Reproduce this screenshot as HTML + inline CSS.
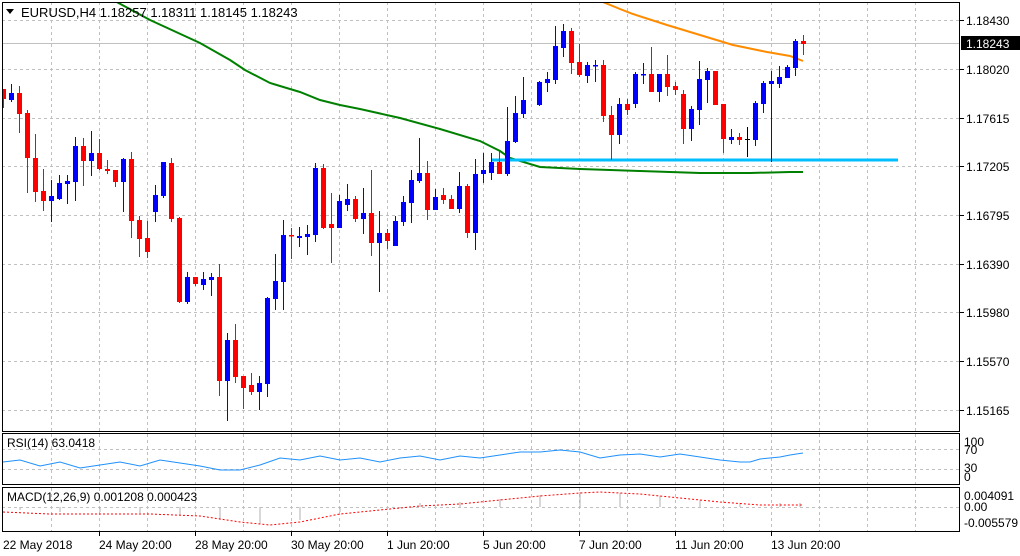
<!DOCTYPE html>
<html><head><meta charset="utf-8"><style>
html,body{margin:0;padding:0;background:#fff;width:1020px;height:556px;overflow:hidden}
svg{display:block;font-family:"Liberation Sans",sans-serif}
</style></head><body>
<svg width="1020" height="556" viewBox="0 0 1020 556" xmlns="http://www.w3.org/2000/svg">
<rect width="1020" height="556" fill="#fff"/>
<defs><clipPath id="mc"><rect x="2" y="2" width="958" height="430"/></clipPath></defs>
<g stroke="#c0c0c0" stroke-dasharray="3,3" stroke-width="1">
<line x1="51.5" y1="2" x2="51.5" y2="532"/><line x1="99.5" y1="2" x2="99.5" y2="532"/><line x1="147.5" y1="2" x2="147.5" y2="532"/><line x1="195.5" y1="2" x2="195.5" y2="532"/><line x1="243.5" y1="2" x2="243.5" y2="532"/><line x1="291.5" y1="2" x2="291.5" y2="532"/><line x1="339.5" y1="2" x2="339.5" y2="532"/><line x1="387.5" y1="2" x2="387.5" y2="532"/><line x1="435.5" y1="2" x2="435.5" y2="532"/><line x1="483.5" y1="2" x2="483.5" y2="532"/><line x1="531.5" y1="2" x2="531.5" y2="532"/><line x1="579.5" y1="2" x2="579.5" y2="532"/><line x1="627.5" y1="2" x2="627.5" y2="532"/><line x1="675.5" y1="2" x2="675.5" y2="532"/><line x1="723.5" y1="2" x2="723.5" y2="532"/><line x1="771.5" y1="2" x2="771.5" y2="532"/><line x1="819.5" y1="2" x2="819.5" y2="532"/><line x1="867.5" y1="2" x2="867.5" y2="532"/><line x1="915.5" y1="2" x2="915.5" y2="532"/>
<line x1="2" y1="20.5" x2="960" y2="20.5"/><line x1="2" y1="69.5" x2="960" y2="69.5"/><line x1="2" y1="118.5" x2="960" y2="118.5"/><line x1="2" y1="166.5" x2="960" y2="166.5"/><line x1="2" y1="215.5" x2="960" y2="215.5"/><line x1="2" y1="264.5" x2="960" y2="264.5"/><line x1="2" y1="312.5" x2="960" y2="312.5"/><line x1="2" y1="361.5" x2="960" y2="361.5"/><line x1="2" y1="410.5" x2="960" y2="410.5"/>
<line x1="2" y1="449.5" x2="960" y2="449.5"/><line x1="2" y1="469.5" x2="960" y2="469.5"/><line x1="2" y1="507.5" x2="960" y2="507.5"/>
</g>
<rect x="0" y="433" width="962" height="1" fill="#fff"/>
<line x1="2" y1="43.5" x2="960" y2="43.5" stroke="#c0c0c0"/>
<g clip-path="url(#mc)">
<polyline fill="none" stroke="#008000" stroke-width="2" points="113,0 150,20 200,43 230,60 245,70 270,83 280,86 300,92 320,100 340,105 360,109 400,118 440,129 480,141 500,151 510,158 540,167 580,169 640,171 700,173 750,173 790,172 803,172"/>
<polyline fill="none" stroke="#ff8c00" stroke-width="2" points="598,0 620,9 633,14 667,25 700,35 733,45 767,52 790,56 803,61"/>
<line x1="492" y1="160" x2="898" y2="160" stroke="#00bfff" stroke-width="3"/>
<g fill="#f00" stroke="#f00">
<line x1="3.5" y1="89" x2="3.5" y2="108"/><rect x="1" y="89" width="5" height="10" stroke="none"/>
<line x1="19.5" y1="86" x2="19.5" y2="133"/><rect x="17" y="93" width="5" height="21" stroke="none"/>
<line x1="27.5" y1="110" x2="27.5" y2="193"/><rect x="25" y="113" width="5" height="45" stroke="none"/>
<line x1="35.5" y1="134" x2="35.5" y2="202"/><rect x="33" y="158" width="5" height="34" stroke="none"/>
<line x1="43.5" y1="169" x2="43.5" y2="211"/><rect x="41" y="191" width="5" height="10" stroke="none"/>
<line x1="83.5" y1="138" x2="83.5" y2="186"/><rect x="81" y="146" width="5" height="15" stroke="none"/>
<line x1="99.5" y1="139" x2="99.5" y2="170"/><rect x="97" y="153" width="5" height="16" stroke="none"/>
<line x1="107.5" y1="160" x2="107.5" y2="174"/><rect x="105" y="169" width="5" height="2" stroke="none"/>
<line x1="115.5" y1="170" x2="115.5" y2="187"/><rect x="113" y="170" width="5" height="12" stroke="none"/>
<line x1="131.5" y1="152" x2="131.5" y2="238"/><rect x="129" y="159" width="5" height="62" stroke="none"/>
<line x1="139.5" y1="216" x2="139.5" y2="257"/><rect x="137" y="220" width="5" height="19" stroke="none"/>
<line x1="147.5" y1="221" x2="147.5" y2="258"/><rect x="145" y="238" width="5" height="14" stroke="none"/>
<line x1="171.5" y1="158" x2="171.5" y2="222"/><rect x="169" y="163" width="5" height="56" stroke="none"/>
<line x1="179.5" y1="217" x2="179.5" y2="303"/><rect x="177" y="218" width="5" height="84" stroke="none"/>
<line x1="195.5" y1="277" x2="195.5" y2="286"/><rect x="193" y="277" width="5" height="7" stroke="none"/>
<line x1="219.5" y1="264" x2="219.5" y2="396"/><rect x="217" y="277" width="5" height="104" stroke="none"/>
<line x1="235.5" y1="324" x2="235.5" y2="383"/><rect x="233" y="340" width="5" height="37" stroke="none"/>
<line x1="243.5" y1="376" x2="243.5" y2="409"/><rect x="241" y="376" width="5" height="12" stroke="none"/>
<line x1="251.5" y1="373" x2="251.5" y2="395"/><rect x="249" y="385" width="5" height="7" stroke="none"/>
<line x1="291.5" y1="228" x2="291.5" y2="259"/><rect x="289" y="235" width="5" height="1.5" stroke="none"/>
<line x1="323.5" y1="164" x2="323.5" y2="229"/><rect x="321" y="168" width="5" height="60" stroke="none"/>
<line x1="331.5" y1="193" x2="331.5" y2="263"/><rect x="329" y="224" width="5" height="4" stroke="none"/>
<line x1="355.5" y1="196" x2="355.5" y2="222"/><rect x="353" y="199" width="5" height="20" stroke="none"/>
<line x1="371.5" y1="170" x2="371.5" y2="256"/><rect x="369" y="213" width="5" height="30" stroke="none"/>
<line x1="387.5" y1="229" x2="387.5" y2="249"/><rect x="385" y="233" width="5" height="8" stroke="none"/>
<line x1="427.5" y1="161" x2="427.5" y2="220"/><rect x="425" y="173" width="5" height="37" stroke="none"/>
<line x1="443.5" y1="188" x2="443.5" y2="204"/><rect x="441" y="195" width="5" height="5" stroke="none"/>
<line x1="451.5" y1="195" x2="451.5" y2="209"/><rect x="449" y="199" width="5" height="10" stroke="none"/>
<line x1="467.5" y1="184" x2="467.5" y2="238"/><rect x="465" y="186" width="5" height="47" stroke="none"/>
<line x1="499.5" y1="150" x2="499.5" y2="174"/><rect x="497" y="162" width="5" height="12" stroke="none"/>
<line x1="571.5" y1="28" x2="571.5" y2="74"/><rect x="569" y="31" width="5" height="32" stroke="none"/>
<line x1="579.5" y1="44" x2="579.5" y2="77"/><rect x="577" y="62" width="5" height="13" stroke="none"/>
<line x1="603.5" y1="60" x2="603.5" y2="122"/><rect x="601" y="65" width="5" height="51" stroke="none"/>
<line x1="611.5" y1="106" x2="611.5" y2="160"/><rect x="609" y="115" width="5" height="20" stroke="none"/>
<line x1="627.5" y1="99" x2="627.5" y2="115"/><rect x="625" y="104" width="5" height="6" stroke="none"/>
<line x1="651.5" y1="47" x2="651.5" y2="92"/><rect x="649" y="74" width="5" height="18" stroke="none"/>
<line x1="667.5" y1="55" x2="667.5" y2="96"/><rect x="665" y="74" width="5" height="13" stroke="none"/>
<line x1="675.5" y1="82" x2="675.5" y2="95"/><rect x="673" y="86" width="5" height="4" stroke="none"/>
<line x1="683.5" y1="90" x2="683.5" y2="144"/><rect x="681" y="94" width="5" height="35" stroke="none"/>
<line x1="715.5" y1="71" x2="715.5" y2="105"/><rect x="713" y="71" width="5" height="34" stroke="none"/>
<line x1="723.5" y1="104" x2="723.5" y2="153"/><rect x="721" y="104" width="5" height="35" stroke="none"/>
<line x1="739.5" y1="133" x2="739.5" y2="145"/><rect x="737" y="137" width="5" height="3" stroke="none"/>
<line x1="803.5" y1="35" x2="803.5" y2="55"/><rect x="801" y="41" width="5" height="3" stroke="none"/>
</g>
<g fill="#00f" stroke="#00f">
<line x1="11.5" y1="84" x2="11.5" y2="102"/><rect x="9" y="93" width="5" height="7" stroke="none"/>
<line x1="51.5" y1="180" x2="51.5" y2="222"/><rect x="49" y="196" width="5" height="5" stroke="none"/>
<line x1="59.5" y1="175" x2="59.5" y2="200"/><rect x="57" y="183" width="5" height="16" stroke="none"/>
<line x1="67.5" y1="175" x2="67.5" y2="204"/><rect x="65" y="181" width="5" height="3" stroke="none"/>
<line x1="75.5" y1="137" x2="75.5" y2="201"/><rect x="73" y="146" width="5" height="36" stroke="none"/>
<line x1="91.5" y1="131" x2="91.5" y2="176"/><rect x="89" y="153" width="5" height="8" stroke="none"/>
<line x1="123.5" y1="158" x2="123.5" y2="212"/><rect x="121" y="159" width="5" height="23" stroke="none"/>
<line x1="155.5" y1="185" x2="155.5" y2="222"/><rect x="153" y="195" width="5" height="17" stroke="none"/>
<line x1="163.5" y1="162" x2="163.5" y2="198"/><rect x="161" y="162" width="5" height="34" stroke="none"/>
<line x1="187.5" y1="272" x2="187.5" y2="304"/><rect x="185" y="277" width="5" height="25" stroke="none"/>
<line x1="203.5" y1="272" x2="203.5" y2="290"/><rect x="201" y="279" width="5" height="6" stroke="none"/>
<line x1="211.5" y1="273" x2="211.5" y2="296"/><rect x="209" y="277" width="5" height="3" stroke="none"/>
<line x1="227.5" y1="333" x2="227.5" y2="421"/><rect x="225" y="340" width="5" height="41" stroke="none"/>
<line x1="259.5" y1="376" x2="259.5" y2="410"/><rect x="257" y="383" width="5" height="9" stroke="none"/>
<line x1="267.5" y1="297" x2="267.5" y2="397"/><rect x="265" y="298" width="5" height="86" stroke="none"/>
<line x1="275.5" y1="254" x2="275.5" y2="310"/><rect x="273" y="281" width="5" height="18" stroke="none"/>
<line x1="283.5" y1="220" x2="283.5" y2="310"/><rect x="281" y="235" width="5" height="47" stroke="none"/>
<line x1="299.5" y1="227" x2="299.5" y2="247"/><rect x="297" y="236" width="5" height="2" stroke="none"/>
<line x1="307.5" y1="225" x2="307.5" y2="255"/><rect x="305" y="234" width="5" height="3" stroke="none"/>
<line x1="315.5" y1="163" x2="315.5" y2="242"/><rect x="313" y="168" width="5" height="67" stroke="none"/>
<line x1="339.5" y1="195" x2="339.5" y2="228"/><rect x="337" y="201" width="5" height="27" stroke="none"/>
<line x1="347.5" y1="184" x2="347.5" y2="211"/><rect x="345" y="199" width="5" height="6" stroke="none"/>
<line x1="363.5" y1="188" x2="363.5" y2="234"/><rect x="361" y="213" width="5" height="6" stroke="none"/>
<line x1="379.5" y1="211" x2="379.5" y2="292"/><rect x="377" y="233" width="5" height="10" stroke="none"/>
<line x1="395.5" y1="216" x2="395.5" y2="246"/><rect x="393" y="221" width="5" height="25" stroke="none"/>
<line x1="403.5" y1="196" x2="403.5" y2="226"/><rect x="401" y="202" width="5" height="20" stroke="none"/>
<line x1="411.5" y1="170" x2="411.5" y2="223"/><rect x="409" y="180" width="5" height="23" stroke="none"/>
<line x1="419.5" y1="138" x2="419.5" y2="183"/><rect x="417" y="173" width="5" height="8" stroke="none"/>
<line x1="435.5" y1="189" x2="435.5" y2="210"/><rect x="433" y="197" width="5" height="13" stroke="none"/>
<line x1="459.5" y1="172" x2="459.5" y2="213"/><rect x="457" y="186" width="5" height="23" stroke="none"/>
<line x1="475.5" y1="159" x2="475.5" y2="250"/><rect x="473" y="174" width="5" height="59" stroke="none"/>
<line x1="483.5" y1="153" x2="483.5" y2="183"/><rect x="481" y="170" width="5" height="4" stroke="none"/>
<line x1="491.5" y1="153" x2="491.5" y2="180"/><rect x="489" y="162" width="5" height="11" stroke="none"/>
<line x1="507.5" y1="107" x2="507.5" y2="176"/><rect x="505" y="141" width="5" height="33" stroke="none"/>
<line x1="515.5" y1="96" x2="515.5" y2="143"/><rect x="513" y="113" width="5" height="29" stroke="none"/>
<line x1="523.5" y1="77" x2="523.5" y2="118"/><rect x="521" y="100" width="5" height="14" stroke="none"/>
<line x1="539.5" y1="81" x2="539.5" y2="106"/><rect x="537" y="82" width="5" height="23" stroke="none"/>
<line x1="547.5" y1="72" x2="547.5" y2="92"/><rect x="545" y="79" width="5" height="4" stroke="none"/>
<line x1="555.5" y1="26" x2="555.5" y2="84"/><rect x="553" y="46" width="5" height="34" stroke="none"/>
<line x1="563.5" y1="24" x2="563.5" y2="57"/><rect x="561" y="31" width="5" height="17" stroke="none"/>
<line x1="587.5" y1="62" x2="587.5" y2="83"/><rect x="585" y="65" width="5" height="11" stroke="none"/>
<line x1="595.5" y1="60" x2="595.5" y2="82"/><rect x="593" y="65" width="5" height="1.5" stroke="none"/>
<line x1="619.5" y1="98" x2="619.5" y2="144"/><rect x="617" y="104" width="5" height="31" stroke="none"/>
<line x1="635.5" y1="72" x2="635.5" y2="108"/><rect x="633" y="74" width="5" height="30" stroke="none"/>
<line x1="643.5" y1="63" x2="643.5" y2="84"/><rect x="641" y="74" width="5" height="1.5" stroke="none"/>
<line x1="659.5" y1="74" x2="659.5" y2="102"/><rect x="657" y="74" width="5" height="18" stroke="none"/>
<line x1="691.5" y1="106" x2="691.5" y2="141"/><rect x="689" y="109" width="5" height="20" stroke="none"/>
<line x1="699.5" y1="61" x2="699.5" y2="125"/><rect x="697" y="79" width="5" height="31" stroke="none"/>
<line x1="707.5" y1="68" x2="707.5" y2="103"/><rect x="705" y="71" width="5" height="9" stroke="none"/>
<line x1="731.5" y1="129" x2="731.5" y2="144"/><rect x="729" y="137" width="5" height="3" stroke="none"/>
<line x1="755.5" y1="101" x2="755.5" y2="146"/><rect x="753" y="103" width="5" height="37" stroke="none"/>
<line x1="763.5" y1="81" x2="763.5" y2="113"/><rect x="761" y="83" width="5" height="21" stroke="none"/>
<line x1="771.5" y1="71" x2="771.5" y2="162"/><rect x="769" y="81" width="5" height="3" stroke="none"/>
<line x1="779.5" y1="66" x2="779.5" y2="88"/><rect x="777" y="77" width="5" height="7" stroke="none"/>
<line x1="787.5" y1="65" x2="787.5" y2="78"/><rect x="785" y="67" width="5" height="11" stroke="none"/>
<line x1="795.5" y1="39" x2="795.5" y2="76"/><rect x="793" y="41" width="5" height="27" stroke="none"/>
</g>
<line x1="747.5" y1="127" x2="747.5" y2="157" stroke="#000"/><rect x="745" y="139" width="5" height="1" fill="#000"/>
</g>
<polyline fill="none" stroke="#1e90ff" stroke-width="1" points="3,462 20,460 40,466 60,462 80,468 100,465 120,462 140,466 160,460 180,463 200,466 220,470 240,470 260,465 280,458 300,460 320,456 340,460 360,458 380,462 400,458 420,456 440,460 460,456 480,458 500,455 520,452 540,452 560,450 580,452 600,458 620,455 640,454 660,457 680,454 700,457 720,460 740,462 750,462 760,459 780,457 790,455 803,453"/>
<g stroke="#b0b0b0">
<line x1="20" y1="507" x2="20" y2="510"/><line x1="60" y1="507" x2="60" y2="512"/><line x1="100" y1="507" x2="100" y2="512"/><line x1="140" y1="507" x2="140" y2="513"/><line x1="180" y1="507" x2="180" y2="515"/><line x1="220" y1="507" x2="220" y2="520"/><line x1="260" y1="507" x2="260" y2="524"/><line x1="300" y1="507" x2="300" y2="520"/><line x1="340" y1="507" x2="340" y2="512"/><line x1="420" y1="507" x2="420" y2="503"/><line x1="460" y1="507" x2="460" y2="502"/><line x1="500" y1="507" x2="500" y2="499"/><line x1="540" y1="507" x2="540" y2="495"/><line x1="580" y1="507" x2="580" y2="492"/><line x1="620" y1="507" x2="620" y2="493"/><line x1="660" y1="507" x2="660" y2="496"/><line x1="700" y1="507" x2="700" y2="500"/><line x1="740" y1="507" x2="740" y2="503"/><line x1="780" y1="507" x2="780" y2="503"/><line x1="800" y1="507" x2="800" y2="503"/>
</g>
<polyline fill="none" stroke="#f00" stroke-dasharray="2,2" points="3,512 50,514 100,514 150,514 200,516 240,522 270,525 300,522 340,514 380,510 420,506 460,504 500,500 540,496 580,493 600,492 640,494 680,498 700,500 720,502 760,505 803,505"/>
<g fill="none" stroke="#000" stroke-width="1">
<rect x="2.5" y="2.5" width="957" height="429"/>
<rect x="2.5" y="433.5" width="957" height="51"/>
<rect x="2.5" y="487.5" width="957" height="44"/>
</g>
<g stroke="#000">
<line x1="960" y1="20.5" x2="964" y2="20.5"/><line x1="960" y1="69.5" x2="964" y2="69.5"/><line x1="960" y1="118.5" x2="964" y2="118.5"/><line x1="960" y1="166.5" x2="964" y2="166.5"/><line x1="960" y1="215.5" x2="964" y2="215.5"/><line x1="960" y1="264.5" x2="964" y2="264.5"/><line x1="960" y1="312.5" x2="964" y2="312.5"/><line x1="960" y1="361.5" x2="964" y2="361.5"/><line x1="960" y1="410.5" x2="964" y2="410.5"/>
<line x1="99.5" y1="532" x2="99.5" y2="536"/><line x1="195.5" y1="532" x2="195.5" y2="536"/><line x1="291.5" y1="532" x2="291.5" y2="536"/><line x1="387.5" y1="532" x2="387.5" y2="536"/><line x1="483.5" y1="532" x2="483.5" y2="536"/><line x1="579.5" y1="532" x2="579.5" y2="536"/><line x1="675.5" y1="532" x2="675.5" y2="536"/><line x1="771.5" y1="532" x2="771.5" y2="536"/>
</g>
<g font-size="12" fill="#000">
<text x="966" y="25">1.18430</text><text x="966" y="74">1.18020</text><text x="966" y="123">1.17615</text><text x="966" y="171">1.17205</text><text x="966" y="220">1.16795</text><text x="966" y="269">1.16390</text><text x="966" y="317">1.15980</text><text x="966" y="366">1.15570</text><text x="966" y="415">1.15165</text>
<rect x="961" y="36" width="59" height="14" fill="#000"/>
<text x="966" y="48" fill="#fff">1.18243</text>
<text x="964" y="446">100</text><text x="964" y="454">70</text><text x="964" y="472">30</text><text x="964" y="481">0</text>
<text x="964" y="500">0.004091</text><text x="964" y="511">0.00</text><text x="964" y="527">-0.005579</text>
<text x="3" y="549">22 May 2018</text><text x="99" y="549">24 May 20:00</text><text x="195" y="549">28 May 20:00</text><text x="291" y="549">30 May 20:00</text><text x="387" y="549">1 Jun 20:00</text><text x="483" y="549">5 Jun 20:00</text><text x="579" y="549">7 Jun 20:00</text><text x="675" y="549">11 Jun 20:00</text><text x="771" y="549">13 Jun 20:00</text>
<path d="M6 9 L14 9 L10 14 Z" fill="#000"/>
<text x="21" y="17" font-size="13">EURUSD,H4  1.18257 1.18311 1.18145 1.18243</text>
<text x="7" y="447">RSI(14) 63.0418</text>
<text x="7" y="501">MACD(12,26,9) 0.001208 0.000423</text>
</g>
</svg>
</body></html>
